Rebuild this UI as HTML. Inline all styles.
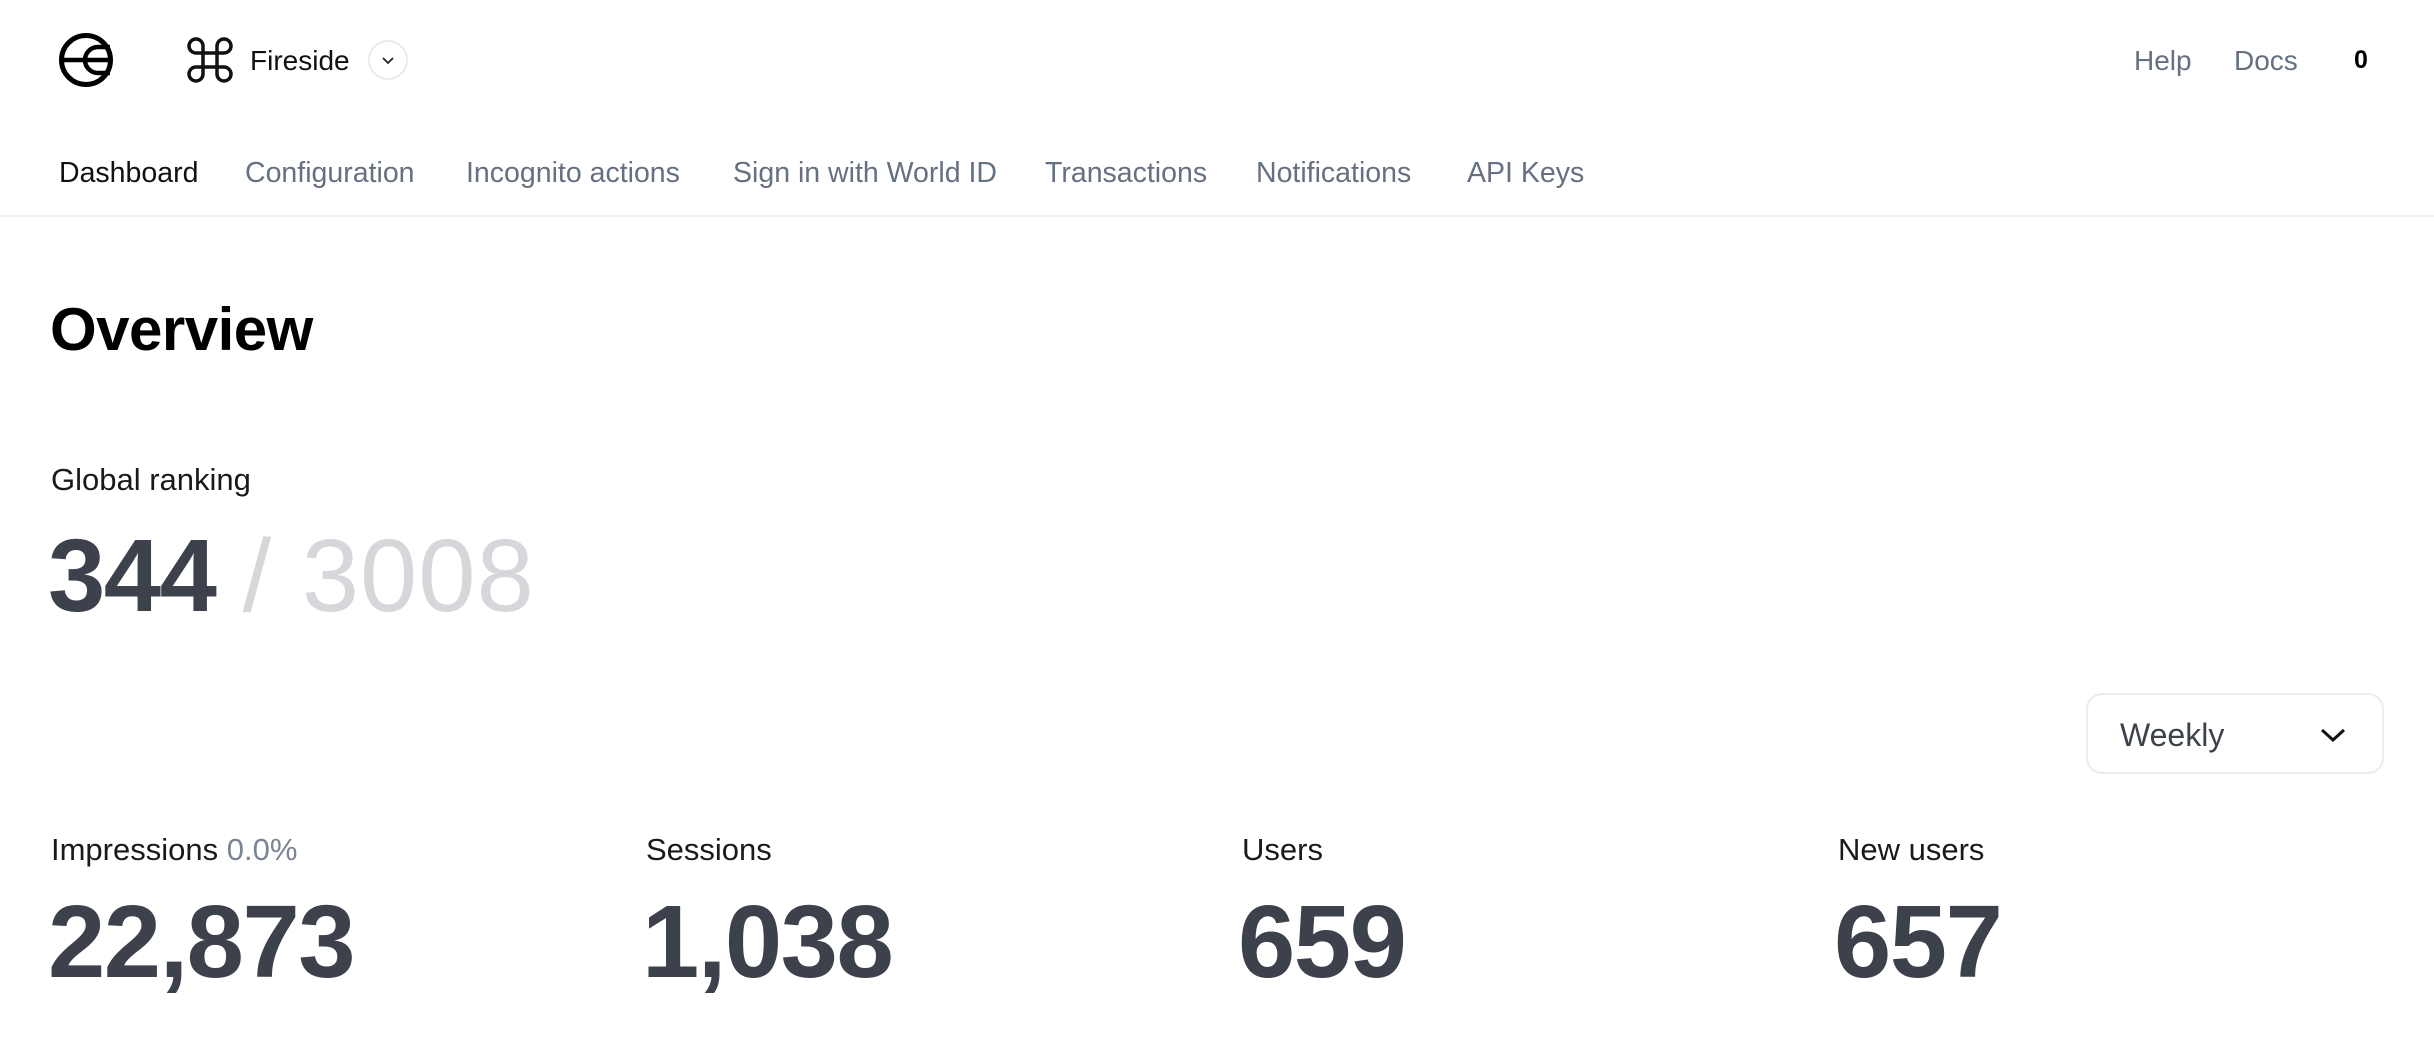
<!DOCTYPE html>
<html><head><meta charset="utf-8">
<style>
html,body{margin:0;padding:0;background:#fff;width:2434px;height:1046px;overflow:hidden;font-family:"Liberation Sans",sans-serif;}
.a{position:absolute;white-space:nowrap;}
.nav{font-size:28.5px;color:#657080;top:157px;}
.lbl{font-size:31px;color:#1a1a1a;top:832px;}
.num{font-size:103px;font-weight:bold;color:#3c414c;top:883px;letter-spacing:-1.5px;}
</style></head><body>
<svg class="a" style="left:0;top:0" width="460" height="120">
  <circle cx="86" cy="60" r="24.5" fill="none" stroke="#000" stroke-width="5"/>
  <path d="M110 47 H98 a13 13 0 0 0 0 26 H110" fill="none" stroke="#000" stroke-width="4.5"/>
  <path d="M62 60 H110" stroke="#000" stroke-width="4.5"/>
  <g fill="none" stroke="#111" stroke-width="3.5">
    <path d="M203 53 H217 V67 H203 Z"/>
    <path d="M203 53 V46 a7 7 0 1 0 -7 7 H203"/>
    <path d="M217 53 V46 a7 7 0 1 1 7 7 H217"/>
    <path d="M203 67 V74 a7 7 0 1 1 -7 -7 H203"/>
    <path d="M217 67 V74 a7 7 0 1 0 7 -7 H217"/>
  </g>
  <circle cx="388" cy="60" r="19" fill="#fff" stroke="#e6e6e6" stroke-width="1.5"/>
  <path d="M383 58 L388 63 L393 58" fill="none" stroke="#222" stroke-width="1.8"/>
</svg>
<div class="a" style="left:250px;top:45px;font-size:28px;color:#111">Fireside</div>
<div class="a" style="left:2134px;top:45px;font-size:28px;color:#657080">Help</div>
<div class="a" style="left:2234px;top:45px;font-size:28px;color:#657080">Docs</div>
<div class="a" style="left:2354px;top:46px;font-size:25px;font-weight:bold;color:#000">0</div>
<div class="a nav" style="left:59px;color:#111">Dashboard</div>
<div class="a nav" style="left:245px">Configuration</div>
<div class="a nav" style="left:466px">Incognito actions</div>
<div class="a nav" style="left:733px">Sign in with World ID</div>
<div class="a nav" style="left:1045px">Transactions</div>
<div class="a nav" style="left:1256px">Notifications</div>
<div class="a nav" style="left:1467px">API Keys</div>
<div class="a" style="left:0;top:215px;width:2434px;height:2px;background:#f2f2f3"></div>
<div class="a" style="left:50px;top:295px;font-size:60px;font-weight:bold;color:#000;letter-spacing:-0.5px">Overview</div>
<div class="a" style="left:51px;top:462px;font-size:31px;color:#1a1a1a">Global ranking</div>
<div class="a" style="left:48px;top:517px;font-size:103px;font-weight:bold;color:#3c414c;letter-spacing:-1.5px">344 <span style="color:#d6d7db;font-weight:normal;letter-spacing:1px">/ 3008</span></div>
<div class="a" style="left:2086px;top:693px;width:298px;height:81px;border:2px solid #ececec;border-radius:16px;box-sizing:border-box"></div>
<div class="a" style="left:2120px;top:717px;font-size:32px;color:#3c414c">Weekly</div>
<svg class="a" style="left:2318px;top:720px" width="30" height="30"><path d="M4 10 L15 20 L26 10" fill="none" stroke="#111" stroke-width="3"/></svg>
<div class="a lbl" style="left:51px">Impressions <span style="color:#7a8494">0.0%</span></div>
<div class="a lbl" style="left:646px">Sessions</div>
<div class="a lbl" style="left:1242px">Users</div>
<div class="a lbl" style="left:1838px">New users</div>
<div class="a num" style="left:48px">22,873</div>
<div class="a num" style="left:642px">1,038</div>
<div class="a num" style="left:1238px">659</div>
<div class="a num" style="left:1834px">657</div>
</body></html>
